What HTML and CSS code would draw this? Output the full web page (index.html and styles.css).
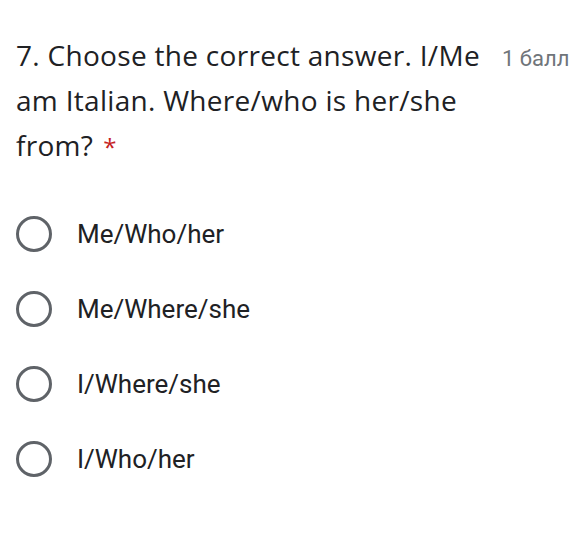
FILE: index.html
```html
<!DOCTYPE html>
<html>
<head>
<meta charset="utf-8">
<link rel="stylesheet" href="styles.css">
</head>
<body>
<div class="question">
  <div class="header">
    <div class="title">7. Choose the correct answer. I/Me am Italian. Where/who is her/she from?<span class="req">*</span></div>
    <div class="points">1 балл</div>
  </div>
  <div class="options">
    <label class="option"><span class="radio"></span><span class="text">Me/Who/her</span></label>
    <label class="option"><span class="radio"></span><span class="text">Me/Where/she</span></label>
    <label class="option"><span class="radio"></span><span class="text">I/Where/she</span></label>
    <label class="option"><span class="radio"></span><span class="text">I/Who/her</span></label>
  </div>
</div>
</body>
</html>
```
FILE: styles.css
```css
html, body { margin: 0; padding: 0; background: #fff; }
body { font-family: "Open Sans", Roboto, sans-serif; color: #202124; }
.question { padding: 33px 0 0 16px; }
.header { display: flex; align-items: baseline; }
.title { width: 484px; flex: none; font-size: 28px; line-height: 45px; letter-spacing: 0.3px; }
.req { color: #c5221f; font-size: 24px; margin-left: 10px; }
.points { font-family: Roboto, sans-serif; font-size: 22px; color: #70757a; margin-left: 2px; white-space: nowrap; }
.options { margin-top: 47px; display: flex; flex-direction: column; gap: 39px; }
.option { display: flex; align-items: center; height: 36px; }
.radio { width: 30px; height: 30px; border: 3px solid #5f6368; border-radius: 50%; flex: none; }
.text { font-family: Roboto, sans-serif; font-size: 26px; margin-left: 25px; color: #202124; }
```
